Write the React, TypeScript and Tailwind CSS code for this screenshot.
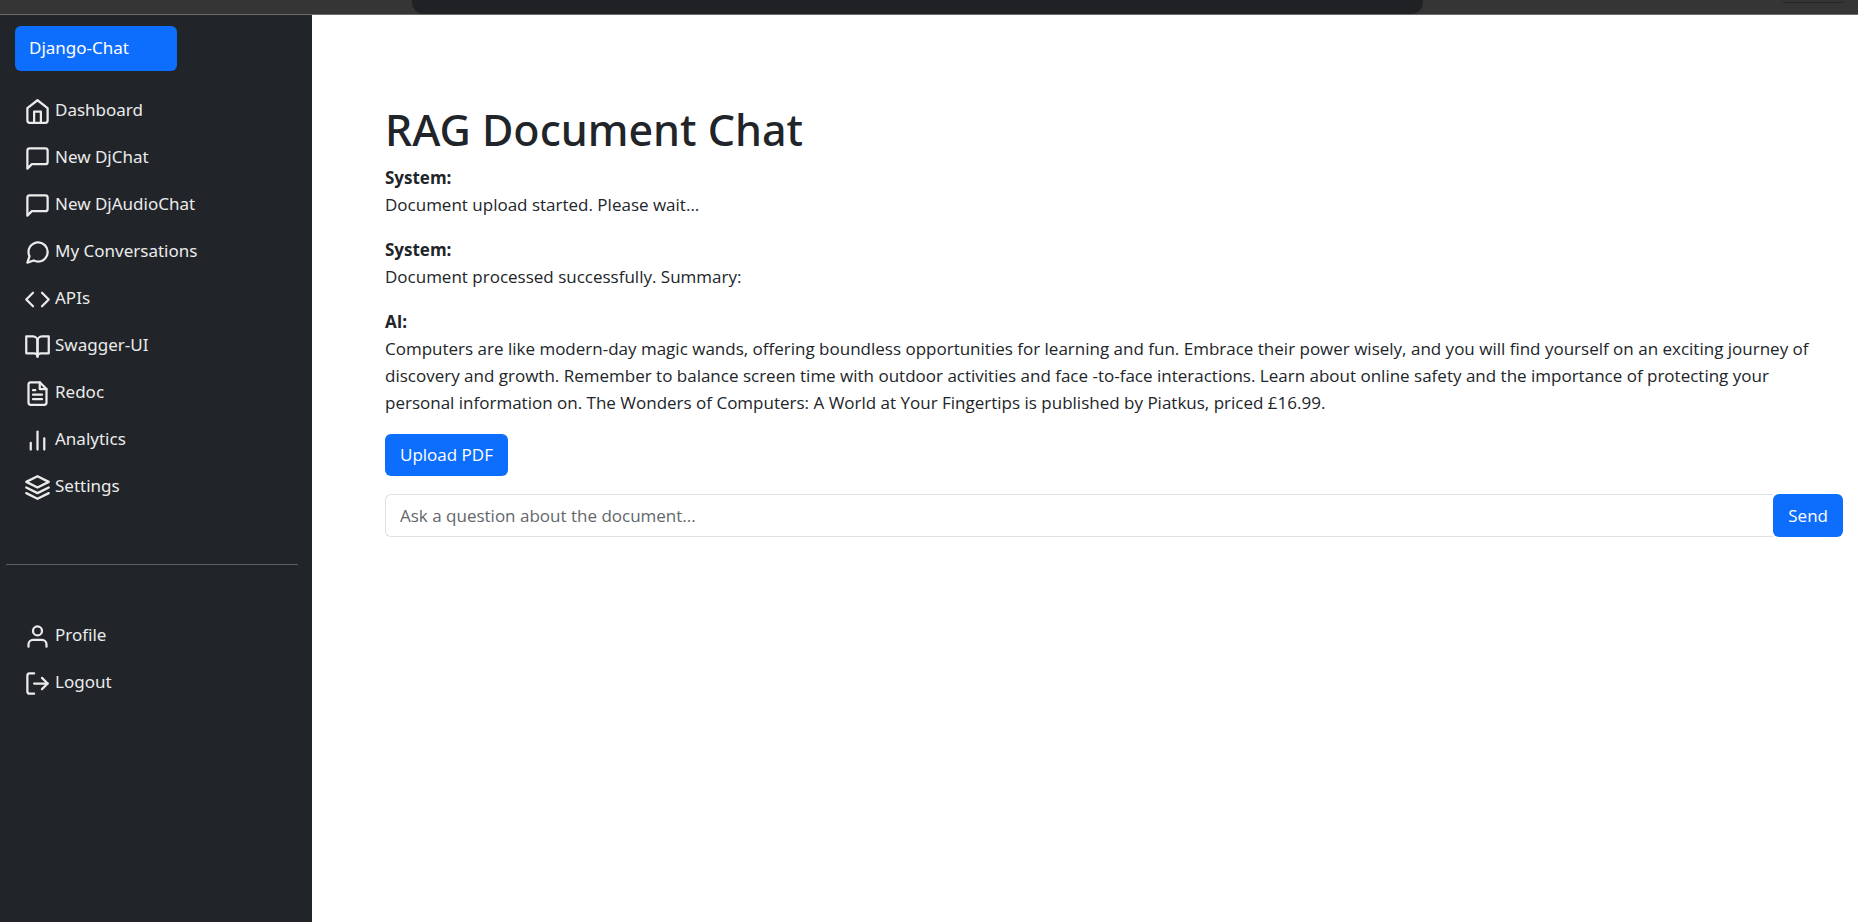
import type { ReactNode } from "react";
import { FiHome, FiMessageSquare, FiMessageCircle, FiCode, FiBookOpen, FiFileText, FiBarChart2, FiLayers, FiUser, FiLogOut } from "react-icons/fi";
import type { IconType } from "react-icons";

type Item = { label: string; icon: IconType };

const mainLinks: Item[] = [
  { label: "Dashboard", icon: FiHome },
  { label: "New DjChat", icon: FiMessageSquare },
  { label: "New DjAudioChat", icon: FiMessageSquare },
  { label: "My Conversations", icon: FiMessageCircle },
  { label: "APIs", icon: FiCode },
  { label: "Swagger-UI", icon: FiBookOpen },
  { label: "Redoc", icon: FiFileText },
  { label: "Analytics", icon: FiBarChart2 },
  { label: "Settings", icon: FiLayers },
];

const accountLinks: Item[] = [
  { label: "Profile", icon: FiUser },
  { label: "Logout", icon: FiLogOut },
];

function NavList({ items }: { items: Item[] }) {
  return (
    <ul>
      {items.map(({ label, icon: Icon }) => (
        <li key={label}>
          <a href="#" className="flex h-[47px] items-center gap-1 pl-6 text-[#ebebeb]">
            <Icon size={27} aria-hidden="true" />
            <span className="pb-1">{label}</span>
          </a>
        </li>
      ))}
    </ul>
  );
}

function Message({ from, children }: { from: string; children: ReactNode }) {
  return (
    <div className="mb-[18px] pr-5">
      <strong className="block font-bold">{from}:</strong>
      <p>{children}</p>
    </div>
  );
}

export default function App() {
  return (
    <div className="flex min-h-screen flex-col bg-white font-['Open_Sans','Noto_Sans',sans-serif] text-[17px] leading-[27px] text-[#212529]">
      <header className="flex h-[15px] justify-between border-b border-[#6b6b6b] bg-[#353535]">
        <div className="w-[22.2%]" />
        <div className="w-[54.4%] rounded-b-xl bg-[#202124]" />
        <div className="flex w-[23.4%] justify-end pr-[14px]">
          <div className="h-[3px] w-[62px] rounded-b-lg border-b border-[#262626]" />
        </div>
      </header>
      <div className="flex flex-1">
        <aside className="w-[312px] shrink-0 bg-[#212529] font-['Noto_Sans','Open_Sans',sans-serif]">
          <a href="#" className="mt-[11px] ml-[15px] flex h-[45px] w-[162px] items-center rounded-md bg-[#0d6efd] px-[14px] pb-0.5 text-white">
            Django-Chat
          </a>
          <nav className="mt-[17px]">
            <NavList items={mainLinks} />
            <hr className="mt-[53px] mr-[14px] mb-12 ml-[6px] border-[#5e6163]" />
            <NavList items={accountLinks} />
          </nav>
        </aside>
        <main className="min-w-0 flex-1 pt-[88px] pr-[15px] pl-[73px]">
          <h1 className="mb-[7px] font-['Noto_Sans','Open_Sans',sans-serif] text-[43px] leading-[54px] font-medium">RAG Document Chat</h1>
          <Message from="System">Document upload started. Please wait...</Message>
          <Message from="System">Document processed successfully. Summary:</Message>
          <Message from="AI">
            Computers are like modern-day magic wands, offering boundless opportunities for learning and fun. Embrace their power wisely, and you will find yourself on an exciting journey of discovery and growth. Remember to balance screen time with outdoor activities and face -to-face interactions. Learn about online safety and the importance of protecting your personal information on. The Wonders of Computers: A World at Your Fingertips is published by Piatkus, priced £16.99.
          </Message>
          <button type="button" className="mb-[18px] flex h-[42px] items-center rounded-md bg-[#0d6efd] px-[15px] pb-0.5 text-white">
            Upload PDF
          </button>
          <form className="flex" onSubmit={(e) => e.preventDefault()}>
            <input
              type="text"
              aria-label="Question"
              placeholder="Ask a question about the document..."
              className="h-[43px] min-w-0 flex-1 rounded-l-md border border-r-0 border-[#dee2e6] px-[14px] placeholder:text-[#62676b]"
            />
            <button type="submit" className="h-[43px] rounded-md bg-[#0d6efd] px-[15px] text-white">
              Send
            </button>
          </form>
        </main>
      </div>
    </div>
  );
}
